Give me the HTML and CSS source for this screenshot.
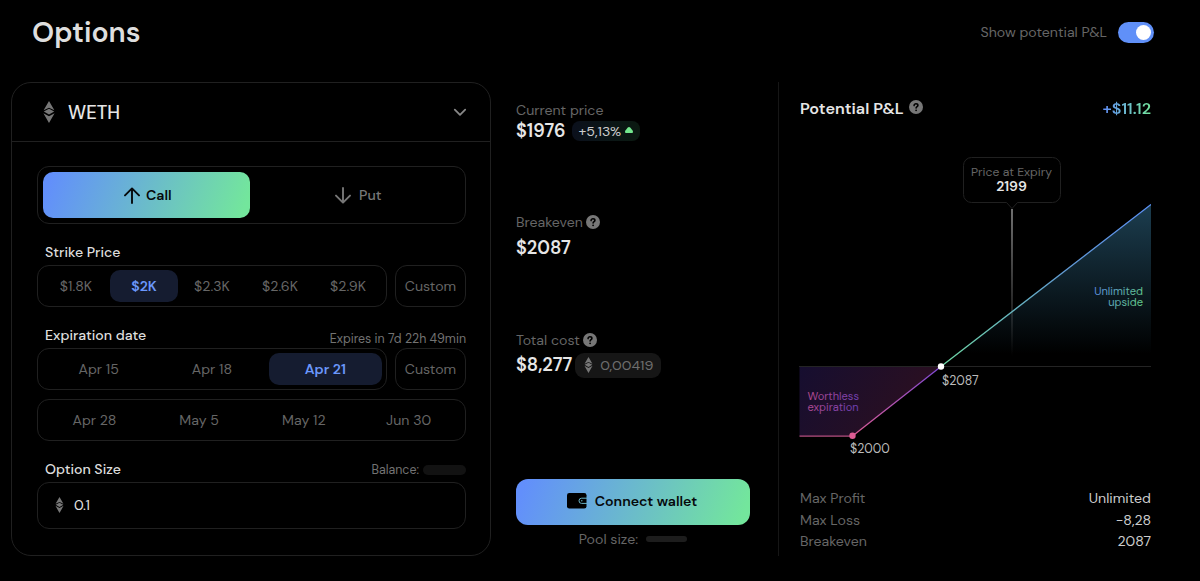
FILE: index.html
```html
<!DOCTYPE html>
<html lang="en">
<head>
    <meta charset="utf-8">
    <title>Options</title>
    <link rel="stylesheet" href="styles.css">
</head>
<body>
    <!-- Shared icons -->
    <svg class="sprite" width="0" height="0">
        <symbol id="eth" viewBox="0 0 12 22">
            <path d="M6 0 11.4 9.2 6 6.8.6 9.2z"/>
            <path d="M6 7.8 11.2 10.6 6 13.6.8 10.6z"/>
            <path d="M.4 12.2 6 15.2l5.6-3L6 22z"/>
        </symbol>
        <symbol id="help" viewBox="0 0 14 14">
            <circle cx="7" cy="7" r="7"/>
            <path class="mark" d="M5.1 5.6C5.1 4.4 6 3.8 7 3.8s1.9.6 1.9 1.6c0 1.2-1.8 1.3-1.8 2.6"/>
            <circle class="dot" cx="7.1" cy="10.3" r=".9"/>
        </symbol>
    </svg>

    <header class="header">
        <h1 class="title">Options</h1>
        <div class="pnl-toggle">
            <span>Show potential P&amp;L</span>
            <span class="switch"><span class="knob"></span></span>
        </div>
    </header>

    <main class="main">
        <section class="panel">
            <div class="panel-head">
                <svg class="eth-icon large"><use href="#eth"/></svg>
                <span class="asset">WETH</span>
                <svg class="chevron" width="14" height="9" viewBox="0 0 14 9"><path d="M1.8 1.6 7 6.8l5.2-5.2"/></svg>
            </div>
            <div class="panel-body">
                <div class="side-switch">
                    <button class="side active">
                        <svg class="arrow" width="16" height="17" viewBox="0 0 16 17"><path d="M8 16V1.6M1 8.4l7-7 7 7"/></svg>
                        <span>Call</span>
                    </button>
                    <button class="side put">
                        <svg class="arrow" width="16" height="17" viewBox="0 0 16 17"><path d="M8 1v14.4M1 8.6l7 7 7-7"/></svg>
                        <span>Put</span>
                    </button>
                </div>

                <div class="field-head">
                    <span class="label">Strike Price</span>
                </div>
                <div class="row">
                    <div class="choices">
                        <button class="choice">$1.8K</button>
                        <button class="choice active">$2K</button>
                        <button class="choice">$2.3K</button>
                        <button class="choice">$2.6K</button>
                        <button class="choice">$2.9K</button>
                    </div>
                    <button class="custom">Custom</button>
                </div>

                <div class="field-head">
                    <span class="label">Expiration date</span>
                    <span class="hint low">Expires in 7d 22h 49min</span>
                </div>
                <div class="row">
                    <div class="choices">
                        <button class="choice">Apr 15</button>
                        <button class="choice">Apr 18</button>
                        <button class="choice active">Apr 21</button>
                    </div>
                    <button class="custom">Custom</button>
                </div>
                <div class="row more">
                    <div class="choices">
                        <button class="choice">Apr 28</button>
                        <button class="choice">May 5</button>
                        <button class="choice">May 12</button>
                        <button class="choice">Jun 30</button>
                    </div>
                </div>

                <div class="field-head">
                    <span class="label">Option Size</span>
                    <span class="hint">Balance: <span class="skeleton balance"></span></span>
                </div>
                <div class="size-input">
                    <svg class="eth-icon small"><use href="#eth"/></svg>
                    <span>0.1</span>
                </div>
            </div>
        </section>

        <section class="summary">
            <div class="stat">
                <div class="stat-label">Current price</div>
                <div class="stat-value">
                    <span>$1976</span>
                    <span class="badge change">+5,13%<svg width="8" height="6" viewBox="0 0 8 6"><path d="M4 0c.6 0 1 .3 1.4.8L7.6 3.6C8.3 4.6 8 6 6.8 6H1.2C0 6-.3 4.6.4 3.6L2.6.8C3 .3 3.4 0 4 0z"/></svg></span>
                </div>
            </div>
            <div class="stat tall">
                <div class="stat-label">Breakeven<svg class="help"><use href="#help"/></svg></div>
                <div class="stat-value spaced">$2087</div>
            </div>
            <div class="stat">
                <div class="stat-label">Total cost<svg class="help"><use href="#help"/></svg></div>
                <div class="stat-value spaced total">
                    <span>$8,277</span>
                    <span class="badge cost"><svg class="eth-icon small"><use href="#eth"/></svg>0,00419</span>
                </div>
            </div>
            <button class="connect">
                <svg width="20" height="16" viewBox="0 0 20 16">
                    <rect width="19.5" height="15.5" rx="2.3"/>
                    <path class="clasp" d="M20 5.2h-5.4a2.6 2.6 0 0 0 0 5.2H20"/>
                    <circle class="clasp-dot" cx="14.8" cy="7.8" r=".7"/>
                </svg>
                <span>Connect wallet</span>
            </button>
            <div class="pool">Pool size: <span class="skeleton pool-size"></span></div>
        </section>

        <section class="pnl">
            <div class="pnl-head">
                <span class="pnl-title">Potential P&amp;L</span>
                <svg class="help"><use href="#help"/></svg>
                <span class="profit">+$11.12</span>
            </div>

            <svg class="chart" width="352" height="310" viewBox="0 0 352 310">
                <defs>
                    <linearGradient id="gain-line" x1="142" y1="216" x2="352" y2="54" gradientUnits="userSpaceOnUse">
                        <stop offset="0" stop-color="#6fd9a4"/>
                        <stop offset=".6" stop-color="#6199d4"/>
                        <stop offset="1" stop-color="#5c8ff5"/>
                    </linearGradient>
                    <linearGradient id="gain-fill" x1="0" y1="54" x2="0" y2="204" gradientUnits="userSpaceOnUse">
                        <stop offset="0" stop-color="#1c3e50"/>
                        <stop offset="1" stop-color="#1c3e50" stop-opacity="0"/>
                    </linearGradient>
                    <linearGradient id="loss-line" x1="53" y1="286" x2="142" y2="216" gradientUnits="userSpaceOnUse">
                        <stop offset="0" stop-color="#dd5c94"/>
                        <stop offset="1" stop-color="#7d49d6"/>
                    </linearGradient>
                    <linearGradient id="loss-fill" x1="0" y1="216" x2="90" y2="276" gradientUnits="userSpaceOnUse">
                        <stop offset="0" stop-color="#160e30"/>
                        <stop offset="1" stop-color="#280f22"/>
                    </linearGradient>
                    <linearGradient id="cursor" x1="0" y1="58" x2="0" y2="206" gradientUnits="userSpaceOnUse">
                        <stop offset="0" stop-color="#8c8c8c"/>
                        <stop offset="1" stop-color="#8c8c8c" stop-opacity="0"/>
                    </linearGradient>
                    <linearGradient id="gain-text" x1="294" y1="138" x2="336" y2="160" gradientUnits="userSpaceOnUse">
                        <stop offset="0" stop-color="#5b86e6"/>
                        <stop offset="1" stop-color="#62c98a"/>
                    </linearGradient>
                    <linearGradient id="loss-text" x1="8" y1="244" x2="58" y2="262" gradientUnits="userSpaceOnUse">
                        <stop offset="0" stop-color="#b84a8c"/>
                        <stop offset="1" stop-color="#6a3fb4"/>
                    </linearGradient>
                </defs>

                <path fill="url(#loss-fill)" d="M.5 216.5H142L53.5 286H.5z"/>
                <path fill="url(#gain-fill)" d="M142 216.5 352 54V216.5z"/>
                <path class="axis" d="M0 216.5H352"/>
                <path class="cursor" d="M213 59V206"/>
                <path class="line" stroke="#b54f80" d="M.5 286.2H53.5"/>
                <path class="line" stroke="url(#loss-line)" d="M53.5 286 142 216.5"/>
                <path class="line" stroke="url(#gain-line)" d="M142 216.5 352 54.5"/>
                <circle cx="53.5" cy="285.8" r="3.2" fill="#dd5c94"/>
                <circle cx="142" cy="216.5" r="3.2" fill="#fff"/>

                <path class="tooltip" d="M172.500 7.500h81a8 8 0 0 1 8 8v29a8 8 0 0 1-8 8h-35l-5.500 6-5.500-6h-35a8 8 0 0 1-8-8v-29a8 8 0 0 1 8-8z"/>
                <text class="tooltip-label" x="212.5" y="26">Price at Expiry</text>
                <text class="tooltip-value" x="212.5" y="41">2199</text>

                <text class="zone end" fill="url(#gain-text)" x="344" y="144.500">Unlimited</text>
                <text class="zone end" fill="url(#gain-text)" x="344" y="156">upside</text>
                <text class="zone" fill="url(#loss-text)" x="8.5" y="249.500">Worthless</text>
                <text class="zone" fill="url(#loss-text)" x="8.5" y="261">expiration</text>
                <text class="price" x="143" y="235">$2087</text>
                <text class="price" x="51" y="303">$2000</text>
            </svg>

            <dl class="totals">
                <div><dt>Max Profit</dt><dd>Unlimited</dd></div>
                <div><dt>Max Loss</dt><dd>-8,28</dd></div>
                <div><dt>Breakeven</dt><dd>2087</dd></div>
            </dl>
        </section>
    </main>
</body>
</html>
```
FILE: styles.css
```css
* {
    box-sizing: border-box;
}
body {
    margin: 0;
    height: 581px;
    overflow: hidden;
    background: #000;
    color: #e6e6e6;
    font-family: "DM Sans", Inter, sans-serif;
    font-size: 14.15px;
    font-optical-sizing: none;
}
button {
    margin: 0;
    padding: 0;
    border: none;
    background: none;
    color: inherit;
    font: inherit;
}
svg {
    display: block;
    flex-shrink: 0;
}
.sprite {
    position: absolute;
}
.header {
    display: flex;
    align-items: center;
    justify-content: space-between;
    height: 65px;
    padding: 0 46px 0 32px;
}
.title {
    margin: 0;
    font-size: 28.4px;
    font-weight: 600;
    color: #dedede;
}
.pnl-toggle {
    display: flex;
    align-items: center;
    gap: 11px;
    color: #666;
    line-height: 17px;
}
.switch {
    display: flex;
    justify-content: flex-end;
    align-items: center;
    width: 36px;
    height: 21px;
    padding: 0 3px;
    border-radius: 11px;
    background: #6090f8;
}
.knob {
    width: 15px;
    height: 15px;
    border-radius: 50%;
    background: #fff;
}
.main {
    display: flex;
    padding: 17px 0 0 11px;
}

/* Order form */
.panel {
    width: 480px;
    height: 474px;
    border: 1px solid #202020;
    border-radius: 20px;
}
.panel-head {
    display: flex;
    align-items: center;
    height: 59px;
    padding: 0 23px 0 31px;
    border-bottom: 1px solid #202020;
}
.eth-icon {
    fill: #777;
}
.eth-icon.large {
    width: 12px;
    height: 22px;
}
.eth-icon.small {
    width: 9px;
    height: 16px;
}
.asset {
    margin-left: 13px;
    padding-top: 2px;
    font-size: 18.5px;
    font-weight: 500;
}
.chevron {
    margin-left: auto;
    fill: none;
    stroke: #888;
    stroke-width: 1.8;
    stroke-linecap: round;
    stroke-linejoin: round;
}
.panel-body {
    padding: 24px 24px 0 25px;
}
.side-switch {
    display: flex;
    gap: 6px;
    height: 58px;
    padding: 5px;
    border: 1px solid #202020;
    border-radius: 12px;
}
.side {
    flex: 1;
    display: flex;
    align-items: center;
    justify-content: center;
    gap: 6px;
    border-radius: 10px;
    font-weight: 600;
    color: #777;
}
.side.active {
    flex: 0 0 206.5px;
    padding-left: 3px;
    background: linear-gradient(110deg, #628ffb 4%, #73e69c 96%);
    color: #06090c;
}
.side.put {
    gap: 8px;
    padding-left: 1px;
    font-weight: 500;
}
.arrow {
    fill: none;
    stroke: currentColor;
    stroke-width: 1.9;
    stroke-linecap: round;
    stroke-linejoin: round;
}
.field-head {
    display: flex;
    justify-content: space-between;
    height: 20px;
    margin: 18px 0 3px;
    padding-left: 8px;
    line-height: 20px;
}
.label {
    font-weight: 500;
    color: #ddd;
}
.hint {
    display: flex;
    align-items: center;
    gap: 4px;
    height: 22px;
    font-size: 12.4px;
    color: #737373;
}
.hint.low {
    padding-top: 6px;
}
.row {
    display: flex;
    gap: 8px;
    height: 42px;
}
.row.more {
    margin-top: 9px;
}
.choices {
    flex: 1;
    display: flex;
    padding: 4px;
    border: 1px solid #202020;
    border-radius: 12px;
}
.choice {
    flex: 1;
    border-radius: 10px;
    color: #666;
}
.choice.active {
    background: #151c30;
    color: #6b97fb;
    font-weight: 600;
}
.custom {
    width: 71px;
    border: 1px solid #202020;
    border-radius: 12px;
    color: #666;
}
.skeleton {
    border-radius: 5px;
    background: #121212;
}
.balance {
    width: 43px;
    height: 10px;
}
.size-input {
    display: flex;
    align-items: center;
    gap: 10px;
    height: 47px;
    padding: 0 0 1px 17px;
    border: 1px solid #202020;
    border-radius: 12px;
}

/* Price summary */
.summary {
    width: 234px;
    height: 474px;
    margin-left: 25px;
    padding-top: 18px;
}
.stat {
    height: 112px;
}
.stat.tall {
    height: 118px;
}
.stat-label {
    display: flex;
    align-items: center;
    gap: 3px;
    height: 19px;
    color: #666;
}
.stat-value {
    display: flex;
    align-items: center;
    gap: 7px;
    height: 22px;
    margin-top: 1px;
    font-size: 18.2px;
    font-weight: 600;
}
.stat-value.spaced {
    margin-top: 6px;
}
.stat-value.total {
    gap: 3px;
    margin-top: 5px;
}
.help {
    width: 14px;
    height: 14px;
    fill: #777;
}
.mark {
    fill: none;
    stroke: #000;
    stroke-width: 1.6;
    stroke-linecap: round;
}
.dot {
    fill: #000;
}
.badge {
    display: flex;
    align-items: center;
    font-size: 14.2px;
    font-weight: 400;
}
.change {
    gap: 4px;
    height: 20px;
    padding: 0 7px 0 6px;
    border-radius: 8px;
    background: linear-gradient(90deg, #0b101c, #0b1a11);
    color: #ccc;
}
.change svg {
    margin-top: -2px;
    fill: #74e88e;
}
.cost {
    gap: 7px;
    height: 25px;
    padding: 0 8px 0 9px;
    border-radius: 9px;
    background: #161616;
    color: #6e6e6e;
}
.connect {
    display: flex;
    align-items: center;
    justify-content: center;
    gap: 8px;
    width: 234px;
    height: 46px;
    margin-top: 37px;
    padding: 0 2px 2px 0;
    border-radius: 12px;
    background: linear-gradient(110deg, #628ffb 4%, #73e69c 96%);
    color: #06090c;
    font-weight: 600;
}
.clasp {
    fill: none;
    stroke: #6bb5c8;
}
.clasp-dot {
    fill: #6bb5c8;
}
.pool {
    display: flex;
    align-items: center;
    justify-content: center;
    gap: 8px;
    height: 20px;
    margin-top: 4px;
    color: #666;
}
.pool-size {
    width: 41px;
    height: 6px;
    background: #1d1d1d;
}

/* Profit and loss */
.pnl {
    width: 373px;
    height: 474px;
    margin-left: 28px;
    padding-left: 21px;
    border-left: 1px solid #161616;
}
.pnl-head {
    display: flex;
    align-items: center;
    gap: 5px;
    height: 52px;
    font-size: 16.2px;
    font-weight: 600;
}
.pnl-head .help {
    margin-top: -3px;
}
.profit {
    margin-left: auto;
    background: linear-gradient(90deg, #628ffb, #73e69c);
    background-clip: text;
    -webkit-background-clip: text;
    color: transparent;
}
.chart {
    margin: 16px 0 0 -1px;
}
.line {
    fill: none;
    stroke-width: 1.3;
}
.axis {
    stroke: #242424;
}
.cursor {
    stroke: url(#cursor);
    stroke-width: 1.6;
}
.tooltip {
    fill: #000;
    stroke: #202020;
}
.tooltip-label,
.tooltip-value {
    text-anchor: middle;
}
.tooltip-label {
    font-size: 12.2px;
    fill: #666;
}
.tooltip-value {
    font-size: 14px;
    font-weight: 600;
    fill: #e6e6e6;
}
.zone {
    font-size: 11.1px;
}
.zone.end {
    text-anchor: end;
}
.price {
    font-size: 12.4px;
    fill: #bbb;
}
.totals {
    margin: 28px 0 0;
}
.totals div {
    display: flex;
    justify-content: space-between;
    line-height: 21.5px;
}
dt {
    color: #666;
}
dd {
    margin: 0;
    color: #ccc;
}
```
